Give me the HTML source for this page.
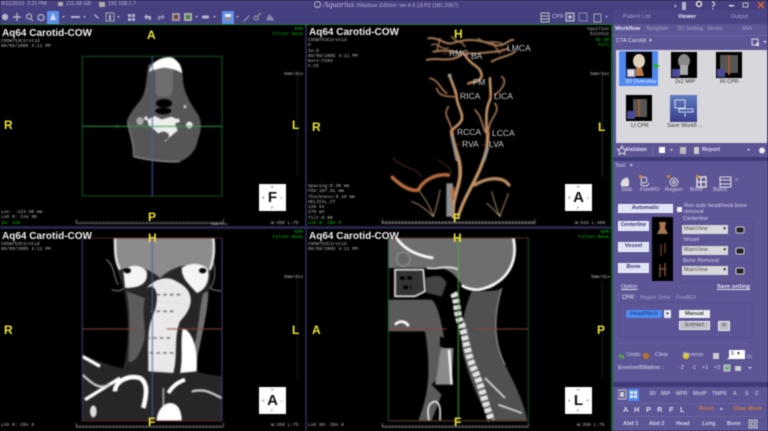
<!DOCTYPE html>
<html><head><meta charset="utf-8"><style>
html,body{margin:0;padding:0;background:#000}
#r{position:relative;width:768px;height:431px;overflow:hidden;background:#4b4586;font-family:"Liberation Sans",sans-serif;filter:blur(.5px)}
.a{position:absolute;white-space:nowrap}
.t{position:absolute;white-space:nowrap;color:#d6d4ea;font-size:5.6px;line-height:7px}
.v{position:absolute;background:#000;overflow:hidden}
.ti{position:absolute;font-weight:bold;font-size:10px;color:#eee;white-space:nowrap;line-height:12px}
.m{position:absolute;font-family:"Liberation Mono",monospace;font-size:4.6px;line-height:5.3px;color:#bbb;white-space:pre}
.g{color:#0c0}
.y{position:absolute;font-weight:bold;font-size:12px;color:#e8e030;line-height:12px}
.ori{position:absolute;width:27px;height:27px;background:#fff;color:#111;text-align:center;font-weight:bold;font-size:15px;line-height:27px}
.ori i{position:absolute;font-style:normal;font-weight:normal;font-size:3.500px;line-height:4px;color:#555}
.lb{position:absolute;color:#ccc;font-size:8.500px;line-height:10px}
.b{position:absolute;background:#dfe3f3;color:#37327a;font-size:5.600px;font-weight:bold;text-align:center;border:1px solid #f0f0f8;box-sizing:border-box}
.s{position:absolute;width:46px;height:9px;background:#d8d8dc;color:#444;font-size:5.500px;line-height:9px;padding-left:2px;box-sizing:border-box}
.s:after{content:"▾";position:absolute;right:2px;top:0;color:#222}
.box{position:absolute;border:1px solid #57508f}
svg{position:absolute;display:block}
.v>svg{filter:blur(.6px)}
</style></head><body><div id="r">

<!-- top bar -->
<div class="a" style="left:0;top:0;width:768px;height:24px;background:#463f80"></div>
<div class="t" style="left:1px;top:1px;font-size:5.300px;color:#bcbad6">6/11/2010&nbsp; 2:21 PM</div>
<div class="t" style="left:66px;top:1px;font-size:5.300px;color:#bcbad6">211.58 GB</div>
<div class="t" style="left:108px;top:1px;font-size:5.300px;color:#bcbad6">192.168.1.7</div>
<svg style="left:57px;top:1px" width="50" height="7"><rect x="1" y="1" width="5" height="4" fill="#aaa"/><rect x="42" y="1" width="6" height="5" fill="#aaa"/></svg>
<div class="a" style="left:314px;top:-1px;font-family:'Liberation Serif',serif;font-style:italic;color:#bdbad6;font-size:8.500px;line-height:10px"><span style="display:inline-block;width:7px;height:7px;border-radius:50%;border:1.500px solid #bbb;box-sizing:border-box;vertical-align:-1px;margin-right:2px"></span>Aquarius <span style="font-size:6px">iNtuition Edition</span> <span style="font-style:normal;font-family:'Liberation Sans';font-size:5.400px;">ver.4.4.13.P2 (181.2357)</span></div>
<svg style="left:0;top:0" width="768" height="24" fill="#b4b2cc" stroke="none">
<circle cx="5" cy="17" r="3.200"/><path d="M17 13v8M13 17h8" stroke="#b4b2cc" stroke-width="1.400"/><circle cx="29" cy="16.500" r="2.500" fill="none" stroke="#b4b2cc" stroke-width="1.200"/><path d="M31 19l2 2" stroke="#b4b2cc" stroke-width="1.200"/><circle cx="41" cy="17.500" r="3" fill="none" stroke="#b4b2cc" stroke-width="1.300"/>
<rect x="47" y="11" width="12" height="13" fill="#5d92e8"/><path d="M50 20l3-7 3 7z" fill="#dde"/><path d="M62 16h3l-1.500 2z"/>
<rect x="71" y="16" width="9" height="2"/><path d="M83 16h3l-1.500 2z"/><path d="M95 14l4 4-1 1-4-4z"/>
<rect x="106" y="13" width="8" height="8" fill="none" stroke="#aaa"/><rect x="109" y="15" width="2" height="5"/><path d="M117 16h3l-1.500 2z"/><rect x="128" y="14" width="3" height="3"/><rect x="132" y="14" width="3" height="3"/><rect x="128" y="18" width="3" height="3"/><rect x="132" y="18" width="3" height="3"/>
<path d="M144 17l3-3v2h4v4h-2v-2h-2v2z"/><path d="M165 17l-3-3v2h-4v4h2v-2h2v2z" fill="#8a87ae"/>
<rect x="172" y="13" width="8" height="8" fill="#9a9aa5"/><rect x="174" y="15" width="4" height="4" fill="#7a3b3b"/><rect x="184" y="13" width="8" height="8" fill="#aaa"/><rect x="186" y="15" width="4" height="4" fill="#4a7a4a"/><path d="M195 16h3l-1.500 2z"/><rect x="202" y="15.500" width="7" height="3" rx="1"/><path d="M213 16h3l-1.500 2z"/>
<rect x="222" y="11" width="12" height="13" fill="#5d92e8"/><rect x="225" y="14" width="6" height="3" fill="#eee"/><rect x="226" y="18" width="4" height="2" fill="#d9824a"/><path d="M236 16h3l-1.500 2z"/>
<path d="M243 21l6-6 1 1-6 6z" fill="#8a87ae"/><circle cx="256" cy="18" r="2" fill="none" stroke="#aaa"/><path d="M258 16l3-3" stroke="#aaa"/><path d="M266 20l3-6 4 4 1 3z" fill="#8a87ae"/>
<rect x="541" y="13" width="8" height="9" fill="none" stroke="#bbb"/><path d="M541 16h8M541 19h8" stroke="#bbb"/>
<rect x="566" y="13" width="8" height="8" fill="#5a5494" stroke="#ccc"/><path d="M570 15v4M568 17h4" stroke="#ddd"/>
<rect x="579" y="13" width="8" height="8" fill="none" stroke="#8a87ae"/><rect x="594" y="14" width="7" height="8" fill="none" stroke="#aaa"/><path d="M605 16h3l-1.500 2z"/>
<path d="M676 4l-2 2 2 2zM686 2h-4v8h4z"/><circle cx="699" cy="4" r="2.500" fill="none" stroke="#ddd" stroke-width="1.500"/><path d="M712 2c3 0 3 3 1 4v1" fill="none" stroke="#ddd" stroke-width="1.200"/><circle cx="713" cy="9" r=".7" fill="#ddd"/>
<rect x="729" y="5" width="5" height="1.500" fill="#ddd"/><rect x="743" y="3" width="5" height="4" fill="none" stroke="#bbb"/><path d="M758 2l6 6M764 2l-6 6" stroke="#c9653a" stroke-width="1.600"/>
</svg>
<div class="t" style="left:552px;top:14px;color:#c8c6de">CPR</div>

<div class="a" style="left:0;top:24px;width:612px;height:407px;background:#27244a"></div>
<div class="a" style="left:0;top:24px;width:612px;height:1.500px;background:#1f7a3c"></div>
<div class="a" style="left:611px;top:24px;width:2px;height:407px;background:#156030"></div>

<!-- VIEW 1 axial -->
<div class="v" style="left:0;top:25px;width:305px;height:201px">
<svg style="left:0;top:15px" width="305" height="186" viewBox="0 0 915 558" fill="none">
<path d="M445 75C440 100 440 150 425 175C410 195 385 225 380 245C385 280 400 310 398 350C440 360 500 368 540 365C575 350 590 325 595 295C605 270 605 245 595 225C575 195 555 165 550 130C548 100 545 85 540 70C500 55 470 60 445 75Z" fill="#565656"/>
<path d="M447 95C455 60 490 50 515 52C535 60 545 80 547 100C525 85 490 78 447 95Z" fill="#fff"/>
<path d="M465 90C470 140 460 160 475 170L510 170C525 150 515 120 520 90C500 80 485 82 465 90Z" fill="#6e6e6e"/>
<ellipse cx="492" cy="190" rx="24" ry="13" fill="#000"/><ellipse cx="490" cy="213" rx="24" ry="10" fill="#000"/>
<ellipse cx="420" cy="243" rx="11" ry="12" fill="#aaa"/><circle cx="568" cy="255" r="10" fill="#eee"/>
<path d="M440 240l25-12 20 10 30-8 12 6 10 0 3 10-15 4 8 22-22 18-15 14-10-12-22-22-18-14-3-12z" fill="#eee"/>
<ellipse cx="490" cy="288" rx="17" ry="13" fill="#555"/>
<circle cx="438" cy="235" r="5" fill="#fff"/><circle cx="555" cy="200" r="5" fill="#bbb"/>
<path d="M400 350C440 360 500 368 540 365" stroke="#aaa" stroke-width="3"/>
<path d="M385 250C390 290 405 310 400 345" stroke="#999" stroke-width="2"/>
<rect x="247" y="49" width="419" height="419" stroke="#1b6a33" stroke-width="2.500"/>
<path d="M457 49V468" stroke="#4c5ab0" stroke-width="3"/><path d="M247 259H666" stroke="#35a045" stroke-width="3"/>
<circle cx="351" cy="259" r="3.500" stroke="#35a045"/>
<path d="M892 110V408" stroke="#999" stroke-width="2" stroke-dasharray="2 6"/>
<path d="M229 550H670" stroke="#aaa" stroke-width="2"/><path d="M229 538V550M670 538V550" stroke="#aaa" stroke-width="2"/><path d="M229 546H670" stroke="#aaa" stroke-width="4" stroke-dasharray="2 8"/>
</svg>
<div class="ti" style="left:2px;top:3px">Aq64 Carotid-COW</div>
<div class="m" style="left:1px;top:14px">C95W753C1rotid
08/09/2005 4:11 PM</div>
<div class="m g" style="left:268px;top:2px;color:#0b0;text-align:right;width:35px">KPR
Filter:None</div>
<div class="y" style="left:147px;top:4px">A</div><div class="y" style="left:4px;top:94px">R</div><div class="y" style="left:292px;top:94px">L</div><div class="y" style="left:148px;top:186px">P</div>
<div class="m" style="left:284px;top:47px">5mm/div</div>
<div class="m" style="left:211px;top:198px;font-size:4px">5mm/div</div>
<div class="ori" style="left:259px;top:159px">F<i style="left:12px;top:1px">A</i><i style="left:12px;bottom:1px">P</i><i style="left:3px;top:12px">R</i><i style="right:3px;top:12px">L</i></div>
<div class="m" style="left:1px;top:185px">Loc: -123.90 mm
LAO 0: CAU 90
<span class="g">Im: 433</span></div>
<div class="m" style="left:271px;top:196px">W:350 L:75</div>
</div>

<!-- VIEW 2 3D -->
<div class="v" style="left:307px;top:25px;width:304px;height:201px">
<svg style="left:-2px;top:-5px" width="305" height="210" viewBox="0 0 915 630" fill="none" stroke-linecap="round" stroke-linejoin="round">
<g stroke="#a87a56">
<path d="M370 55C400 50 420 75 440 70S500 50 550 70 610 55 625 60M385 95C420 85 470 105 520 100S590 95 610 85M365 120C400 110 430 130 470 105M560 125C585 110 610 110 630 95" stroke-width="6"/>
<path d="M380 75C400 65 405 90 430 85M520 55C540 75 570 60 590 70M440 50C455 70 470 60 480 80M560 65L585 100M405 55L395 95" stroke-width="4"/>
<path d="M480 105C500 140 525 135 530 165C530 185 505 185 490 190" stroke="#b98a62" stroke-width="8"/>
<path d="M435 170C445 200 455 215 455 235C460 265 475 280 470 300C460 320 445 320 440 335" stroke="#c29468" stroke-width="8"/>
<path d="M555 175C555 205 560 225 555 240C540 270 545 300 545 340" stroke="#c29468" stroke-width="8"/>
<path d="M375 175C400 180 405 205 425 220M395 205C400 230 430 230 450 230M590 170C605 180 600 200 570 225M430 260C410 290 440 300 440 335M570 250C590 280 550 290 550 340M510 270C530 290 530 310 540 335" stroke-width="5"/>
<path d="M440 335C445 390 470 410 465 470C460 510 440 540 445 590" stroke="#c29468" stroke-width="11"/>
<path d="M549 340C545 400 545 390 535 420C520 470 490 510 470 560C465 575 460 585 460 590" stroke="#c29468" stroke-width="10"/>
<path d="M440 350C445 370 450 400 455 420" stroke="#8f8f8f" stroke-width="7"/>
<path d="M548 385L538 420" stroke="#999" stroke-width="8"/>
<path d="M430 465C380 460 350 490 340 510C320 515 290 500 262 472" stroke="#b4693e" stroke-width="11"/>
<path d="M510 495C540 475 590 465 612 495" stroke="#b98a62" stroke-width="10"/>
<path d="M265 415C290 445 330 440 350 470M400 420C420 440 430 430 440 460" stroke="#5e3420" stroke-width="2.500"/>
<path d="M345 515C360 540 375 555 385 590M405 510C400 540 395 560 385 590M320 545C350 555 370 575 385 590M560 515C570 550 575 570 585 590M610 520C600 550 590 570 585 590M545 550C560 560 575 580 585 590" stroke="#c9a67a" stroke-width="2.500"/>
<rect x="424" y="490" width="20" height="100" fill="#8f8f8f" stroke="none"/><rect x="440" y="500" width="8" height="40" fill="#b4693e" stroke="none"/>
<circle cx="434" cy="167" r="6" fill="#999" stroke="none"/>
</g>
<g fill="#d03020"><circle cx="419" cy="102" r="2.500"/><circle cx="481" cy="105" r="2.500"/><circle cx="593" cy="87" r="2.500"/><circle cx="491" cy="188" r="2.500"/><circle cx="452" cy="228" r="2.500"/><circle cx="555" cy="229" r="2.500"/><circle cx="444" cy="336" r="2.500"/><circle cx="548" cy="340" r="2.500"/><circle cx="459" cy="373" r="2.500"/><circle cx="536" cy="374" r="2.500"/></g>
<path d="M892 170V470" stroke="#999" stroke-width="2" stroke-dasharray="2 6"/>
<path d="M232 610H690" stroke="#aaa" stroke-width="2"/><path d="M232 606H690" stroke="#aaa" stroke-width="4" stroke-dasharray="2 8"/><path d="M232 598V610M690 598V610" stroke="#aaa" stroke-width="2"/>
</svg>
<div class="ti" style="left:2px;top:2px">Aq64 Carotid-COW</div>
<div class="m" style="left:1px;top:13px">C95W753C1rotid
O
Se:5
08/09/2005 4:11 PM
Kern:FC04
C:CE</div>
<div class="m" style="left:260px;top:2px;width:42px;text-align:right">Aqui7ion
512x512
<span class="g">3D VR
Full</span></div>
<div class="y" style="left:147px;top:3px">H</div><div class="y" style="left:5px;top:96px">R</div><div class="y" style="left:291px;top:96px">L</div><div class="y" style="left:146px;top:187px">F</div>
<div class="lb" style="left:142px;top:23px">RMC</div><div class="lb" style="left:164px;top:26px">BA</div>
<div class="lb" style="left:200px;top:18px">LMCA</div><div class="lb" style="left:166px;top:52px">FM</div>
<div class="lb" style="left:153px;top:65.500px">RICA</div><div class="lb" style="left:187px;top:66px">LICA</div>
<div class="lb" style="left:150px;top:102px">RCCA</div><div class="lb" style="left:185px;top:103px">LCCA</div>
<div class="lb" style="left:155px;top:114px">RVA</div><div class="lb" style="left:182px;top:114px">LVA</div>
<div class="m" style="left:1px;top:159px">Spacing:0.30 mm
FOV:197.81 mm
Thickness:0.10 mm
HELICAL_CT
120 kV
270 mA
Tilt:0.00
<span class="g">LAO 0: CRA 0</span></div>
<div class="m" style="left:268px;top:196px">W:524 L:408</div>
<div class="m" style="left:283px;top:47px">5mm/div</div>
<div class="ori" style="left:258px;top:159px">A<i style="left:12px;top:1px">H</i><i style="left:12px;bottom:1px">F</i><i style="left:3px;top:12px">R</i><i style="right:3px;top:12px">L</i></div>
</div>

<!-- VIEW 3 coronal -->
<div class="v" style="left:0;top:229px;width:305px;height:202px">
<svg style="left:0;top:-1px" width="305" height="203" viewBox="0 0 915 609" fill="none">
<path d="M345 30H640C648 80 635 120 630 170C620 240 595 300 570 420C600 440 640 440 666 445V578H247V380C300 400 345 420 370 420C390 340 385 250 370 180C350 130 340 80 345 30Z" fill="#262626"/>
<path d="M345 30H640C645 70 640 100 630 130C590 100 530 105 480 150C450 125 420 110 360 125C345 90 340 60 345 30Z" fill="#8c8c8c"/>
<path d="M345 30C345 70 345 100 360 125M640 30C645 70 640 100 630 125" stroke="#eee" stroke-width="7"/>
<path d="M370 130C385 110 420 105 440 130C445 160 430 180 375 180ZM545 120C570 100 620 105 625 130C630 165 610 190 590 195C570 170 545 155 545 120Z" fill="#f4f4f4"/>
<ellipse cx="382" cy="128" rx="11" ry="8" fill="#000"/><ellipse cx="608" cy="128" rx="11" ry="8" fill="#000"/>
<path d="M380 190C392 250 388 330 385 400C400 410 420 380 432 340C440 310 425 260 435 210Z" fill="#5c5c5c"/>
<path d="M610 195C595 250 600 310 570 400L590 400C610 300 625 240 625 190Z" fill="#707070"/>
<path d="M440 180C470 160 480 210 460 260C440 300 445 350 445 430L520 435C535 380 520 330 540 280C580 240 590 190 530 160C500 140 460 155 440 180Z" fill="#e8e8e8"/>
<path d="M450 250h70M440 330h80M450 375h70M470 200h80" stroke="#555" stroke-width="4" stroke-dasharray="10 10"/>
<path d="M548 300C580 310 595 370 590 430L540 435C550 390 540 350 548 300Z" fill="#fff"/>
<path d="M345 490C345 460 385 440 420 450C445 465 440 500 430 540" stroke="#fff" stroke-width="14"/>
<path d="M505 495C520 470 540 460 555 455" stroke="#fff" stroke-width="12"/>
<path d="M247 385L300 415M255 515L360 450" stroke="#fff" stroke-width="10"/><path d="M247 440C290 480 300 480 330 470M575 490C620 480 640 500 666 510" stroke="#ccc" stroke-width="7"/><path d="M490 480V540" stroke="#aaa" stroke-width="5"/>
<ellipse cx="280" cy="550" rx="10" ry="18" fill="#ddd"/>
<path d="M470 578C470 550 490 525 510 525C535 525 545 550 545 578Z" fill="#fff"/>
<path d="M318 95C345 110 340 150 355 170M335 185C350 190 365 190 370 180M640 100C650 140 640 170 630 180C640 190 655 185 663 190" stroke="#888" stroke-width="3"/>
<rect x="247" y="30" width="419" height="549" stroke="#6c2a2a" stroke-width="2.500"/>
<path d="M247 30V578M666 30V578" stroke="#3d4690" stroke-width="2.500"/>
<path d="M457 30V578" stroke="#4c5ab0" stroke-width="3"/><path d="M247 303H410M500 303H666" stroke="#8f4540" stroke-width="3"/>
<path d="M892 160V455" stroke="#999" stroke-width="2" stroke-dasharray="2 6"/>
<path d="M229 597H670" stroke="#aaa" stroke-width="2"/><path d="M229 593H670" stroke="#aaa" stroke-width="4" stroke-dasharray="2 8"/><path d="M229 585V597M670 585V597" stroke="#aaa" stroke-width="2"/>
</svg>
<div class="ti" style="left:2px;top:2px">Aq64 Carotid-COW</div>
<div class="m" style="left:1px;top:13px">C95W753C1rotid
08/09/2005 4:11 PM</div>
<div class="m" style="left:268px;top:1px;width:35px;text-align:right"><span class="g">KPR
Filter:None</span></div>
<div class="y" style="left:148px;top:3px">H</div><div class="y" style="left:4px;top:95px">R</div><div class="y" style="left:292px;top:95px">L</div><div class="y" style="left:148px;top:187px">F</div>
<div class="m" style="left:284px;top:46px">5mm/div</div>
<div class="m" style="left:1px;top:194px">LAO 0: CRA 0</div><div class="m" style="left:271px;top:194px">W:350 L:75</div>
<div class="ori" style="left:259px;top:158px">A<i style="left:12px;top:1px">H</i><i style="left:12px;bottom:1px">F</i><i style="left:3px;top:12px">R</i><i style="right:3px;top:12px">L</i></div>
</div>

<!-- VIEW 4 sagittal -->
<div class="v" style="left:307px;top:229px;width:304px;height:202px">
<svg style="left:-2px;top:-1px" width="305" height="203" viewBox="0 0 915 609" fill="none">
<path d="M265 30H630C640 90 620 140 560 180C520 190 490 185 470 170C440 120 400 110 360 120L250 120V30Z" fill="#6e6e6e"/>
<path d="M275 30C300 70 350 85 385 90M625 30C640 100 610 160 535 182C515 188 490 185 470 172" stroke="#fff" stroke-width="8"/>
<circle cx="295" cy="93" r="20" fill="#666" stroke="#999" stroke-width="3"/>
<path d="M270 125H355L360 190L330 205H270Z" fill="#333" stroke="#eee" stroke-width="5"/>
<path d="M285 150h40M295 178h25" stroke="#000" stroke-width="10" stroke-dasharray="14 8"/>
<path d="M365 120C400 125 430 110 460 125" stroke="#ddd" stroke-width="6"/><path d="M362 150C400 140 410 140 425 165L410 205L365 195Z" fill="#444"/>
<path d="M250 215H380C400 230 410 290 420 340C400 380 420 400 420 430L380 470L410 500L380 578H340C370 500 380 430 360 310L250 310Z" fill="#5a5a5a"/>
<path d="M390 470C405 400 400 380 410 360L445 360L440 470Z" fill="#8a8a8a"/><path d="M432 365L440 470" stroke="#fff" stroke-width="7"/>
<path d="M270 290C285 275 305 280 310 295" stroke="#fff" stroke-width="8"/>
<path d="M500 190C540 190 580 190 590 180C570 250 560 330 600 410C630 470 660 530 666 578H560C530 540 500 470 480 400C460 340 470 260 500 190Z" fill="#505050"/>
<path d="M445 195C460 220 452 260 470 290C485 350 492 390 505 420C530 470 540 530 560 578" stroke="#e4e4e4" stroke-width="22" stroke-dasharray="14 5"/>
<path d="M540 450L600 510M580 530L650 555" stroke="#ddd" stroke-width="5"/>
<path d="M372 578C365 540 370 525 390 520C410 525 405 560 405 578" stroke="#eee" stroke-width="5"/>
<path d="M405 325l25 10-10 25-15-5z" fill="#000"/><path d="M590 180C570 250 560 330 600 410" stroke="#aaa" stroke-width="3"/>
<rect x="250" y="30" width="420" height="549" stroke="#1b6a33" stroke-width="2.500"/>
<path d="M250 30H670M250 578H670" stroke="#6c2a2a" stroke-width="2.500"/>
<path d="M460 30V578" stroke="#50a648" stroke-width="3"/><path d="M250 303H425M505 303H670" stroke="#8f4540" stroke-width="3"/>
<path d="M892 160V455" stroke="#999" stroke-width="2" stroke-dasharray="2 6"/>
<path d="M232 597H670" stroke="#aaa" stroke-width="2"/><path d="M232 593H670" stroke="#aaa" stroke-width="4" stroke-dasharray="2 8"/><path d="M232 585V597M670 585V597" stroke="#aaa" stroke-width="2"/>
</svg>
<div class="ti" style="left:2px;top:2px">Aq64 Carotid-COW</div>
<div class="m" style="left:1px;top:13px">C95W753C1rotid
08/09/2005 4:11 PM</div>
<div class="m" style="left:267px;top:1px;width:35px;text-align:right"><span class="g">KPR
Filter:None</span></div>
<div class="y" style="left:146px;top:3px">H</div><div class="y" style="left:5px;top:95px">A</div><div class="y" style="left:290px;top:95px">P</div><div class="y" style="left:147px;top:187px">F</div>
<div class="m" style="left:284px;top:46px">5mm/div</div>
<div class="m" style="left:1px;top:194px">LAO 90: CRA 0</div><div class="m" style="left:270px;top:194px">W:350 L:75</div>
<div class="ori" style="left:258px;top:158px">L<i style="left:12px;top:1px">H</i><i style="left:12px;bottom:1px">F</i><i style="left:3px;top:12px">A</i><i style="right:3px;top:12px">P</i></div>
</div>

<!-- right panel -->
<div class="a" style="left:613px;top:10px;width:155px;height:421px;background:#5c5596"></div>
<div class="a" style="left:613px;top:10px;width:155px;height:14px;background:#4b4586"></div>
<div class="t" style="left:623px;top:14px;color:#a9a6cc">Patient List</div>
<div class="t" style="left:678px;top:14px;color:#eceaf6;font-weight:bold">Viewer</div>
<div class="t" style="left:731px;top:14px;color:#a9a6cc">Output</div>
<div class="t" style="left:615px;top:26px;color:#e4e2f2;font-weight:bold">Workflow</div>
<div class="t" style="left:646px;top:26px;color:#a9a6cc">Template</div>
<div class="t" style="left:677px;top:26px;color:#a9a6cc">3D Setting</div>
<div class="t" style="left:707px;top:26px;color:#a9a6cc">Series</div>
<div class="t" style="left:742px;top:26px;color:#a9a6cc">MIA</div>
<div class="a" style="left:613px;top:35px;width:155px;height:1px;background:#6c66a4"></div>
<div class="t" style="left:616px;top:38px;color:#e4e2f2">CTA Carotid &nbsp;▾</div>
<svg style="left:751px;top:38px" width="16" height="9"><rect x="1" y="1" width="6" height="6" fill="none" stroke="#ddd"/><rect x="5" y="5" width="3" height="3" fill="#ddd"/><path d="M12 3h4l-2 2z" fill="#ddd"/></svg>

<div class="a" style="left:616px;top:50px;width:151px;height:93px;background:#d8d8dc"></div>
<div class="a" style="left:619px;top:51px;width:39px;height:35px;background:#4f88f0"></div>
<svg style="left:625px;top:51px" width="130" height="72">
<rect x="1" y="1" width="26" height="26" fill="#000"/><ellipse cx="14" cy="10" rx="6" ry="7" fill="#ddd0b8"/><path d="M11 17h6l2 8H9z" fill="#b87a4a"/><rect x="2" y="18" width="8" height="8" fill="#ddd" stroke="#5552a0"/>
<rect x="46" y="1" width="26" height="26" fill="#000"/><ellipse cx="59" cy="10" rx="6" ry="7" fill="#888"/><path d="M55 14h8v10h-8z" fill="#aaa"/><rect x="47" y="18" width="8" height="8" fill="#4c4a98"/>
<rect x="91" y="1" width="26" height="26" fill="#000"/><path d="M95 4h18v18H95z" fill="#555"/><path d="M104 4v20" stroke="#a5582a" stroke-width="2"/><rect x="92" y="18" width="8" height="8" fill="#4c4a98"/>
<path d="M29 12l6 3-6 3z" fill="#22b030"/>
<rect x="1" y="44" width="26" height="26" fill="#000"/><path d="M8 48h14v18H8z" fill="#555"/><path d="M14 48v18" stroke="#a5582a" stroke-width="2"/><rect x="2" y="60" width="8" height="8" fill="#4c4a98"/>
<defs><linearGradient id="lg" x1="0" y1="0" x2="0" y2="1"><stop offset="0" stop-color="#5f7cc0"/><stop offset="1" stop-color="#3a3f8c"/></linearGradient></defs>
<rect x="45" y="44" width="27" height="27" fill="url(#lg)"/><rect x="50" y="49" width="10" height="8" fill="none" stroke="#cfd8f0"/><path d="M54 58h14v3H54zM60 62v4" stroke="#cfd8f0" fill="none"/>
</svg>
<div class="t" style="left:625px;top:79px;color:#eef;font-size:5.500px">3D Overview</div>
<div class="t" style="left:675px;top:79px;color:#333;font-size:5.500px">2x2 MIP</div>
<div class="t" style="left:720px;top:79px;color:#333;font-size:5.500px">Rt CPR</div>
<div class="t" style="left:631px;top:123px;color:#333;font-size:5.500px">Lt CPR</div>
<div class="t" style="left:667px;top:123px;color:#333;font-size:5.500px">Save Workfl ...</div>

<svg style="left:616px;top:145px" width="152" height="12"><path d="M6 1l1.500 3 3 .5-2 2 .5 3-3-1.500-3 1.500.5-3-2-2 3-.5z" fill="none" stroke="#ddd"/><rect x="36" y="1" width="1" height="10" fill="#7470aa"/><rect x="43" y="2" width="6" height="6" fill="#fff"/><path d="M54 4h3l-1.500 2z" fill="#ddd"/><rect x="64" y="2" width="6" height="7" fill="#bbb"/><rect x="78" y="2" width="5" height="7" fill="#ccc"/><path d="M131 4h3l-1.500 2z" fill="#ddd"/><circle cx="146" cy="5.500" r="3" fill="#eee"/></svg>
<div class="t" style="left:626px;top:147px;font-weight:bold;color:#dedcf0">Validate</div>
<div class="t" style="left:702px;top:147px;font-weight:bold;color:#dedcf0">Report</div>
<div class="a" style="left:613px;top:157px;width:155px;height:3.500px;background:#3f3a78"></div>
<div class="t" style="left:615px;top:163px">Tool &nbsp;&nbsp;▾</div>

<svg style="left:617px;top:175px" width="120" height="13" fill="none" stroke="#ddd"><path d="M5 11c-2-2 0-7 5-8 2 2 2 6 1 8z" fill="#ddd"/><circle cx="27" cy="5" r="3"/><path d="M25 8c-3 1 0 3 3 3s4-2 3-3"/><circle cx="57" cy="7" r="4"/><circle cx="57" cy="7" r="1.500"/><path d="M80 2h9v10h-9zM84 2v10M80 7h9" stroke-width="1.500"/><path d="M103 2h11v10h-11zM103 5h11M103 9h11"/><rect x="22" y="0" width="3" height="3" fill="#d08030" stroke="none"/><rect x="50" y="0" width="3" height="3" fill="#d08030" stroke="none"/><rect x="79" y="0" width="3" height="3" fill="#d08030" stroke="none"/></svg>
<div class="t" style="left:621px;top:187px;font-size:5.500px">Slab</div><div class="t" style="left:640px;top:187px;font-size:5.500px">FreeRO</div><div class="t" style="left:665px;top:187px;font-size:5.500px">Region</div><div class="t" style="left:690px;top:187px;font-size:5.500px">Bone</div><div class="t" style="left:713px;top:187px;font-size:5.500px">Batch</div>
<div class="t" style="left:735px;top:177px">»</div>

<div class="b" style="left:618px;top:204px;width:55px;height:9px;line-height:7px">Automatic</div>
<div class="a" style="left:677px;top:207px;width:5px;height:5px;background:#eee"></div>
<div class="t" style="left:684px;top:203px;font-size:5.500px;line-height:6px">Run auto head/neck bone<br>removal</div>
<div class="b" style="left:618px;top:221px;width:31px;height:9.500px;line-height:7.500px;font-size:5.200px">Centerline</div>
<div class="b" style="left:618px;top:242px;width:31px;height:9.500px;line-height:7.500px">Vessel</div>
<div class="b" style="left:618px;top:263px;width:31px;height:9.500px;line-height:7.500px">Bone</div>
<svg style="left:652px;top:217px" width="21" height="64"><rect width="21" height="21" fill="#000"/><path d="M7 5h7l-1 6 3 6H5l3-6z" fill="#a8764e"/><rect y="21" width="21" height="21" fill="#000"/><path d="M9 27v12M13 26v10" stroke="#5a3a20" stroke-width="1.500"/><rect y="42" width="21" height="22" fill="#000"/><path d="M8 47v13M13 46v13M7 52h7" stroke="#7a4e2e" stroke-width="1.500"/></svg>
<div class="box" style="left:681px;top:219px;width:70px;height:20px"></div>
<div class="box" style="left:681px;top:240px;width:70px;height:20px"></div>
<div class="box" style="left:681px;top:261px;width:70px;height:20px"></div>
<div class="t" style="left:682px;top:216px;background:#5c5596;padding:0 1px;font-size:5.500px">Centerline</div>
<div class="t" style="left:682px;top:237px;background:#5c5596;padding:0 1px;font-size:5.500px">Vessel</div>
<div class="t" style="left:682px;top:258px;background:#5c5596;padding:0 1px;font-size:5.500px">Bone Removal</div>
<div class="s" style="left:682px;top:225px">MainView</div><div class="s" style="left:682px;top:246px">MainView</div><div class="s" style="left:682px;top:266px">MainView</div>
<svg style="left:735px;top:226px" width="10" height="50"><rect x="1" y="1" width="8" height="6" rx="1" fill="#222" stroke="#ccc"/><rect x="1" y="22" width="8" height="6" rx="1" fill="#222" stroke="#ccc"/><rect x="1" y="42" width="8" height="6" rx="1" fill="#222" stroke="#ccc"/></svg>
<div class="t" style="left:621px;top:284px;text-decoration:underline;color:#e4e2f2">Option</div>
<div class="t" style="left:717px;top:284px;text-decoration:underline;color:#e4e2f2;font-weight:bold">Save setting</div>

<div class="a" style="left:618px;top:294px;width:18px;height:9px;background:#5c5596;border:1px solid #6e68a6;box-sizing:border-box"></div>
<div class="t" style="left:622px;top:295px;color:#f0f0f8">CPR</div>
<div class="t" style="left:640px;top:295px;color:#aaa8cc;font-size:5.200px">Region Grow</div>
<div class="t" style="left:676px;top:295px;color:#aaa8cc;font-size:5.200px">FreeROI</div>
<div class="box" style="left:618px;top:302px;width:133px;height:34px"></div>
<div class="a" style="left:626px;top:310px;width:36px;height:8px;background:#4d8cf0;color:#1a2a80;font-size:5.500px;line-height:8px;text-align:center;border-radius:1px">Head/Neck</div>
<div class="a" style="left:664px;top:310px;width:7px;height:8px;background:#e8e8f4;color:#223;font-size:5px;line-height:8px;text-align:center">▾</div>
<div class="b" style="left:679px;top:310px;width:31px;height:8px;line-height:6px;font-size:5.500px;background:#eee;color:#444">Manual</div>
<div class="b" style="left:679px;top:321px;width:31px;height:9px;line-height:7px;font-size:5.500px;background:#bdbdc5;color:#666">Extract</div>
<div class="b" style="left:718px;top:321px;width:12px;height:10px;line-height:8px;background:#bdbdc5;color:#777;font-size:7px">✕</div>
<div class="a" style="left:618px;top:343px;width:128px;height:1px;background:#6a64a2"></div>

<svg style="left:616px;top:351px" width="150" height="10"><path d="M2 5l3-3v2h3v4H6V6H5v2z" fill="#55a050"/><circle cx="30" cy="5" r="3.200" fill="#b07030"/><circle cx="70" cy="5" r="3.200" fill="#d8c020"/><rect x="97" y="2" width="6" height="6" fill="#ccc"/><path d="M111 8l5-5 1 1-5 5z" fill="#ccc"/></svg>
<div class="t" style="left:627px;top:352px;font-size:5.500px">Undo</div><div class="t" style="left:655px;top:352px;font-size:5.500px">Clear</div><div class="t" style="left:683px;top:352px;font-size:5.500px">Reverse</div>
<div class="a" style="left:729px;top:350px;width:16px;height:9px;background:#fff;font-size:5.500px;line-height:9px;color:#222;padding-left:2px;box-sizing:border-box">5&nbsp;&nbsp;▾</div>
<div class="t" style="left:747px;top:354px;font-size:5px">cc</div>
<div class="t" style="left:618px;top:365px;font-size:5.500px;font-weight:bold;color:#c4c2dc">Erosion/Dilation :</div>
<div class="t" style="left:679px;top:365px;font-size:5.500px">-2</div><div class="t" style="left:691px;top:365px;font-size:5.500px">-1</div><div class="t" style="left:702px;top:365px;font-size:5.500px">+1</div><div class="t" style="left:714px;top:365px;font-size:5.500px">+2</div>
<svg style="left:723px;top:364px" width="30" height="9"><rect x="1" y="1" width="6" height="6" fill="#9aa" stroke="#ccc"/><rect x="3" y="3" width="2" height="2" fill="#4c4"/><rect x="12" y="2" width="6" height="5" fill="#ccc"/><path d="M25 3h4l-2 2z" fill="#ddd"/></svg>
<div class="a" style="left:613px;top:382px;width:155px;height:5px;background:#3f3a78"></div>

<svg style="left:618px;top:389px" width="22" height="12"><rect x="0" y="1" width="8" height="9" fill="none" stroke="#ccc"/><rect x="2" y="3" width="4" height="5" fill="#ccc"/><rect x="10" y="0" width="11" height="12" fill="#4d8cf0"/><rect x="12" y="2" width="3" height="3" fill="#eee"/><rect x="16" y="2" width="3" height="3" fill="#eee"/><rect x="12" y="6" width="3" height="3" fill="#eee"/><rect x="16" y="6" width="3" height="3" fill="#eee"/></svg>
<div class="t" style="left:649px;top:391px;font-size:5.200px;font-weight:bold;color:#bcbad8">3D</div><div class="t" style="left:661px;top:391px;font-size:5.200px;font-weight:bold;color:#bcbad8">MIP</div><div class="t" style="left:676px;top:391px;font-size:5.200px;font-weight:bold;color:#bcbad8">MPR</div><div class="t" style="left:693px;top:391px;font-size:5.200px;font-weight:bold;color:#bcbad8">MinIP</div><div class="t" style="left:712px;top:391px;font-size:5.200px;font-weight:bold;color:#bcbad8">TMPR</div><div class="t" style="left:733px;top:391px;font-size:5.200px;font-weight:bold;color:#bcbad8">A</div><div class="t" style="left:745px;top:391px;font-size:5.200px;font-weight:bold;color:#bcbad8">S</div><div class="t" style="left:755px;top:391px;font-size:5.200px;font-weight:bold;color:#bcbad8">C</div>
<div class="a" style="left:618px;top:403px;width:146px;height:1px;background:#6a64a2"></div>
<div class="t" style="left:623px;top:405px;font-size:7.500px;line-height:10px;font-weight:bold;color:#d8d6ea">A</div><div class="t" style="left:634px;top:405px;font-size:7.500px;line-height:10px;font-weight:bold;color:#d8d6ea">H</div><div class="t" style="left:646px;top:405px;font-size:7.500px;line-height:10px;font-weight:bold;color:#d8d6ea">P</div><div class="t" style="left:657px;top:405px;font-size:7.500px;line-height:10px;font-weight:bold;color:#d8d6ea">R</div><div class="t" style="left:669px;top:405px;font-size:7.500px;line-height:10px;font-weight:bold;color:#d8d6ea">F</div><div class="t" style="left:680px;top:405px;font-size:7.500px;line-height:10px;font-weight:bold;color:#d8d6ea">L</div>
<div class="t" style="left:699px;top:406px;font-size:5.500px;color:#c9803a;font-weight:bold">Reset</div>
<div class="t" style="left:720px;top:406px;font-size:5.500px">▴</div>
<div class="t" style="left:733px;top:406px;font-size:5.500px;color:#c9803a;font-weight:bold">Clear Mask</div>
<div class="a" style="left:618px;top:416px;width:146px;height:1px;background:#6a64a2"></div>
<div class="t" style="left:623px;top:421px;font-size:5.500px;font-weight:bold">Abd 1</div>
<div class="t" style="left:649px;top:421px;font-size:5.500px;font-weight:bold">Abd 2</div>
<div class="t" style="left:676px;top:421px;font-size:5.500px;font-weight:bold">Head</div>
<div class="t" style="left:702px;top:421px;font-size:5.500px;font-weight:bold">Lung</div>
<div class="t" style="left:727px;top:421px;font-size:5.500px;font-weight:bold">Bone</div>
<svg style="left:748px;top:419px" width="10" height="10"><path d="M1 1h3v3H1zM6 1h3v3H6zM1 6h3v3H1zM6 6h3v3H6z" fill="none" stroke="#ccc"/></svg>
</div></body></html>
